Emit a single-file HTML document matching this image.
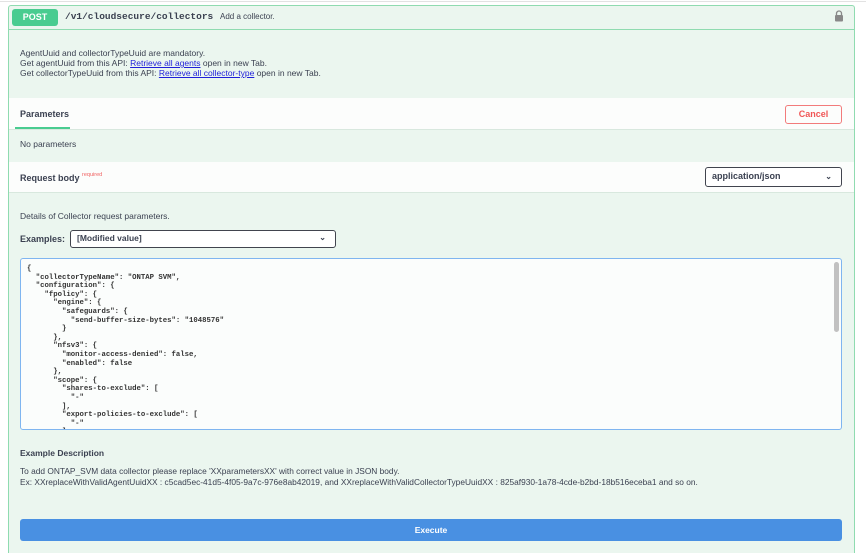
<!DOCTYPE html>
<html><head><style>
*{margin:0;padding:0;box-sizing:border-box}
html,body{width:866px;height:553px;overflow:hidden}
body{background:#fff;font-family:"Liberation Sans",sans-serif;color:#3b4151;position:relative}
.abs{position:absolute}
.box{left:8px;top:5px;width:847px;height:548px;background:#ebf6ef;border:1px solid #8fdbb0;border-bottom:none;border-radius:3px 3px 0 0}
.top{left:0;top:1px;width:866px;height:1px;background:#e2e2e2}
.t9{font-size:8.5px;line-height:10px}
a{color:#1f1fd9;text-decoration:underline}
.white{background:#fcfdfc;left:9px;width:845px}
.code{font-family:"Liberation Mono",monospace;font-size:7.3px;line-height:8.6px;font-weight:bold;color:#333;white-space:pre}
</style></head><body>
<div class="abs top"></div>
<div class="abs box"></div>
<div class="abs" style="left:9px;top:29px;width:845px;height:1px;background:#8fdbb0"></div>
<div class="abs" style="left:12px;top:9px;width:46px;height:17px;background:#49cc90;border-radius:3px;color:#fff;font-weight:bold;font-size:9px;line-height:17px;text-align:center">POST</div>
<div class="abs" style="left:65px;top:9px;font-family:'Liberation Mono',monospace;font-weight:bold;font-size:9.5px;line-height:15px;color:#3b4151">/v1/cloudsecure/collectors</div>
<div class="abs" style="left:220px;top:11px;font-size:8px;line-height:12px">Add a collector.</div>
<svg class="abs" style="left:834px;top:10px" width="10" height="12" viewBox="0 0 10 12"><path d="M2.5 5V3.5a2.5 2.5 0 0 1 5 0V5" fill="none" stroke="#888" stroke-width="1.3"/><rect x="1" y="5" width="8" height="6.5" rx="1" fill="#888"/></svg>
<div class="abs t9" style="left:20px;top:48px">AgentUuid and collectorTypeUuid are mandatory.<br>Get agentUuid from this API: <a>Retrieve all agents</a> open in new Tab.<br>Get collectorTypeUuid from this API: <a>Retrieve all collector-type</a> open in new Tab.</div>
<div class="abs white" style="top:98px;height:32px;border-bottom:1px solid #d8e8de"></div>
<div class="abs" style="left:20px;top:109px;font-size:9px;font-weight:bold">Parameters</div>
<div class="abs" style="left:15px;top:127px;width:55px;height:2px;background:#49cc90"></div>
<div class="abs" style="left:785px;top:105px;width:57px;height:19px;border:1.5px solid #f27b7b;border-radius:3px;color:#f05555;font-weight:bold;font-size:9px;line-height:16px;text-align:center">Cancel</div>
<div class="abs t9" style="left:20px;top:139px">No parameters</div>
<div class="abs white" style="top:162px;height:31px;border-bottom:1px solid #d8e8de"></div>
<div class="abs" style="left:20px;top:172px;font-size:9px;font-weight:bold">Request body <sup style="color:#f06060;font-size:5.5px;font-weight:normal;vertical-align:5px">required</sup></div>
<div class="abs" style="left:705px;top:167px;width:137px;height:20px;border:1.5px solid #41444e;border-radius:3px;background:#fff;font-size:9px;font-weight:bold;line-height:17px;padding-left:6px">application/json<span style="position:absolute;right:9px;top:0;font-size:8px">&#8964;</span></div>
<div class="abs t9" style="left:20px;top:211px">Details of Collector request parameters.</div>
<div class="abs" style="left:20px;top:234px;font-size:9px;font-weight:bold">Examples:</div>
<div class="abs" style="left:70px;top:230px;width:266px;height:18px;border:1.5px solid #41444e;border-radius:3px;background:#fff;font-size:8.5px;font-weight:bold;line-height:15px;padding-left:6px">[Modified value]<span style="position:absolute;right:9px;top:-1px;font-size:8px">&#8964;</span></div>
<div class="abs" style="left:20px;top:258px;width:822px;height:172px;border:1.5px solid #7fb5f0;border-radius:3px;background:#fbfdfc;overflow:hidden">
<div class="code" style="position:absolute;left:6px;top:6px">{
  "collectorTypeName": "ONTAP SVM",
  "configuration": {
    "fpolicy": {
      "engine": {
        "safeguards": {
          "send-buffer-size-bytes": "1048576"
        }
      },
      "nfsv3": {
        "monitor-access-denied": false,
        "enabled": false
      },
      "scope": {
        "shares-to-exclude": [
          "-"
        ],
        "export-policies-to-exclude": [
          "-"
        ],</div>
<div style="position:absolute;right:2px;top:3px;width:5px;height:70px;background:#c1c1c1;border-radius:3px"></div>
</div>
<div class="abs" style="left:20px;top:448px;font-size:8.5px;font-weight:bold">Example Description</div>
<div class="abs" style="left:20px;top:466px;font-size:8.35px;line-height:10.5px">To add ONTAP_SVM data collector please replace 'XXparametersXX' with correct value in JSON body.<br>Ex: XXreplaceWithValidAgentUuidXX : c5cad5ec-41d5-4f05-9a7c-976e8ab42019, and XXreplaceWithValidCollectorTypeUuidXX : 825af930-1a78-4cde-b2bd-18b516eceba1 and so on.</div>
<div class="abs" style="left:20px;top:519px;width:822px;height:22px;background:#4990e2;border-radius:3px;color:#fff;font-weight:bold;font-size:8.5px;line-height:22px;text-align:center">Execute</div>
</body></html>
